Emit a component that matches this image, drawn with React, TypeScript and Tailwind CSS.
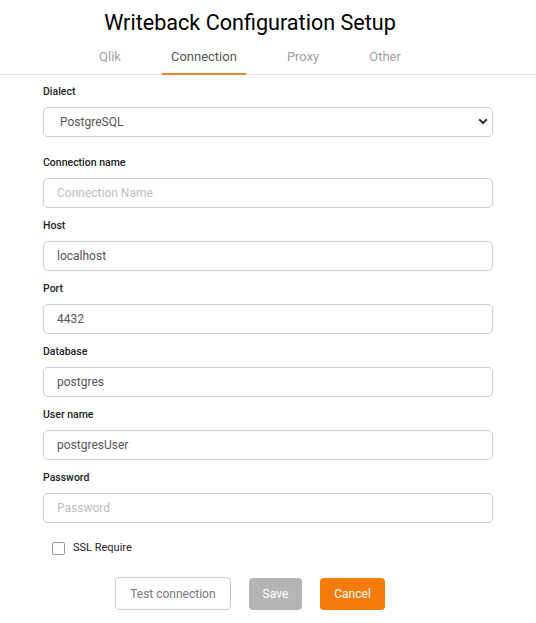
import React from "react";

const font = { fontFamily: "Roboto, 'Liberation Sans', Arial, sans-serif" };

function Field({ label, value, placeholder }: { label: string; value?: string; placeholder?: string }) {
  return (
    <div className="flex flex-col mb-[11px]">
      <label className="text-[10.5px] leading-[14px] font-medium text-[#222] mb-[8px]">{label}</label>
      <input
        readOnly
        defaultValue={value}
        placeholder={placeholder}
        className="h-[30px] w-full rounded-[5px] border border-[#cccccc] bg-white pl-[13px] text-[12px] text-[#555] placeholder:text-[#bdbdbd] outline-none"
      />
    </div>
  );
}

export default function App() {
  const tabs = ["Qlik", "Connection", "Proxy", "Other"];
  return (
    <div className="w-[536px] min-h-[623px] bg-white" style={font}>
      <div className="w-[500px] pt-[9px] text-center text-[21.6px] leading-[28px] text-black">
        Writeback Configuration Setup
      </div>
      <div className="border-b border-[#e6e6e6]">
        <div className="w-[500px] flex justify-center gap-[32px]">
          {tabs.map((t) => (
            <div
              key={t}
              className={
                t === "Connection"
                  ? "px-[9px] pt-[11px] pb-[7px] leading-[18px] text-[13px] text-[#555] border-b-2 border-[#e8832f] -mb-px"
                  : "px-[9px] pt-[11px] pb-[7px] leading-[18px] text-[13px] text-[#a0a0a0] border-b-2 border-transparent -mb-px"
              }
            >
              {t}
            </div>
          ))}
        </div>
      </div>
      <div className="pl-[43px] w-[493px] pt-[10px]">
        <div className="flex flex-col mb-[19px]">
          <label className="text-[10.5px] leading-[14px] font-medium text-[#222] mb-[8px]">Dialect</label>
          <div className="relative">
            <select
              defaultValue="PostgreSQL"
              className="appearance-none h-[30px] w-full rounded-[5px] border border-[#cccccc] bg-white pl-[16px] text-[12px] text-[#555] outline-none"
            >
              <option>PostgreSQL</option>
              <option>MySQL</option>
              <option>MSSQL</option>
            </select>
            <svg
              className="absolute right-[5px] top-[11px] pointer-events-none"
              width="10"
              height="7"
              viewBox="0 0 10 7"
            >
              <path d="M1.2 1.3 L5 5 L8.8 1.3" fill="none" stroke="#333" strokeWidth="2" />
            </svg>
          </div>
        </div>
        <Field label="Connection name" placeholder="Connection Name" />
        <Field label="Host" value="localhost" />
        <Field label="Port" value="4432" />
        <Field label="Database" value="postgres" />
        <Field label="User name" value="postgresUser" />
        <Field label="Password" placeholder="Password" />
        <div className="flex items-center gap-[8px] pl-[9px] mt-[18px] h-[14px]">
          <span className="w-[13px] h-[13px] rounded-[2px] border border-[#9a9a9a] bg-white" />
          <span className="text-[11px] text-[#222]">SSL Require</span>
        </div>
      </div>
      <div className="w-[500px] flex justify-center gap-[18px] mt-[22px]">
        <button className="h-[33px] px-[14px] rounded-[4px] border border-[#cccccc] bg-white text-[12px] text-[#777]">
          Test connection
        </button>
        <button className="h-[32px] mt-[1px] px-[14px] rounded-[4px] bg-[#b5b5b5] text-[12px] text-white">
          Save
        </button>
        <button className="h-[32px] mt-[1px] px-[14px] rounded-[4px] bg-[#f57c0b] text-[12px] text-white">
          Cancel
        </button>
      </div>
    </div>
  );
}
